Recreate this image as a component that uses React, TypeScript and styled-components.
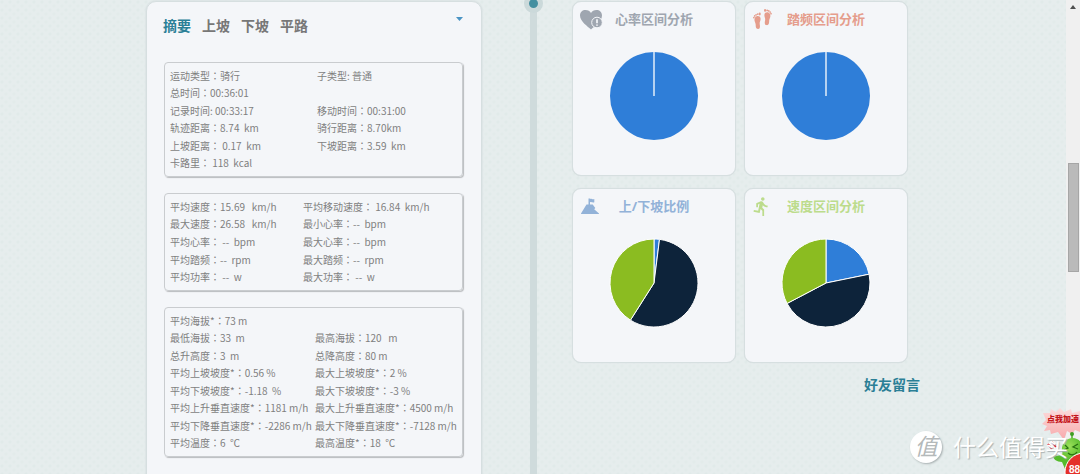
import React from "react";
import styled, { createGlobalStyle } from "styled-components";
import { MdDirectionsRun } from "react-icons/md";

const color = {
  page: "#e6eded",
  surface: "#f4f6f9",
  edge: "#d6dfe0",
  text: "#7f7f7f",
  teal: "#2b7f96",
  blue: "#2f7ed8",
  navy: "#0d233a",
  green: "#8bbc21",
};

const GlobalStyle = createGlobalStyle`
  *, *::before, *::after { box-sizing: border-box; }
  body {
    margin: 0;
    font-family: "Noto Sans", "Noto Sans CJK SC", sans-serif;
    color: ${color.text};
    background: ${color.page};
  }
  button { font: inherit; color: inherit; background: none; border: 0; padding: 0; cursor: pointer; }
  ul, h2, p { margin: 0; padding: 0; list-style: none; }
`;

const Shell = styled.div`
  position: relative;
  display: grid;
  grid-template-columns: 1fr 14px;
  height: 100vh;
  overflow: hidden;
`;

const Page = styled.main`
  overflow: hidden;
  background-color: ${color.page};
  background-image:
    radial-gradient(circle at 2px 2px, #e1eae9 1px, transparent 2px),
    radial-gradient(circle at 6px 6px, #e3ebea 1px, transparent 2px);
  background-size: 8px 8px;
`;

const Columns = styled.div`
  display: grid;
  grid-template-columns: 1fr 20px 1fr;
  max-width: 774px;
  min-height: 100%;
  margin: 0 auto;
`;

const SummaryPanel = styled.section`
  width: 336px;
  margin-top: 1px;
  padding: 12px 18px 40px 16px;
  background: ${color.surface};
  border: 1px solid ${color.edge};
  border-radius: 10px;
  box-shadow: 0 0 1px 1px #dde5e6;
`;

const PanelHead = styled.div`
  display: flex;
  justify-content: space-between;
  align-items: flex-start;
  height: 48px;
`;

const Tabs = styled.nav`
  display: flex;
  gap: 11px;
`;

const Tab = styled.button<{ $active?: boolean }>`
  font-size: 14px;
  line-height: 24px;
  font-weight: 700;
  color: ${(p) => (p.$active ? color.teal : "#777")};
`;

const MenuButton = styled.button`
  display: flex;
  padding: 3px 0;
`;

const StatList = styled.div`
  display: grid;
  gap: 16px;
  padding-left: 1px;
`;

const StatBox = styled.ul<{ $split: number; $height: number }>`
  display: grid;
  grid-template-columns: ${(p) => p.$split}px 1fr;
  grid-auto-rows: 1fr;
  align-items: center;
  min-height: ${(p) => p.$height}px;
  padding: 4px 0 4px 5px;
  border: 1px solid #c9cccf;
  border-radius: 4px;
  box-shadow: 1px 1px 1px #b9bcbe;
`;

const Stat = styled.li<{ $second?: boolean }>`
  grid-column: ${(p) => (p.$second ? 2 : 1)};
  font-family: "Noto Sans CJK SC", sans-serif;
  font-size: 10px;
  line-height: 16px;
  white-space: pre;
`;

const Colon = styled.span`
  font-family: "Noto Sans CJK TC", sans-serif;
`;

const Timeline = styled.div`
  position: relative;
  width: 7px;
  margin: 0 auto;
  background: #cfdbdc;
`;

const TimelineNode = styled.span`
  position: absolute;
  top: -6px;
  left: -6px;
  width: 19px;
  height: 19px;
  border: 5px solid #cbd9da;
  border-radius: 50%;
  background: #448fa0;
`;

const Side = styled.div`
  padding: 1px 0 0 29px;
`;

const CardGrid = styled.div`
  display: grid;
  grid-template-columns: 164px 164px;
  gap: 12px 8px;
`;

const Card = styled.section`
  min-height: 175px;
  padding: 5px 6px;
  background: ${color.surface};
  border: 1px solid ${color.edge};
  border-radius: 9px;
  box-shadow: 0 0 1px #cfd8d9;
`;

const CardHead = styled.div<{ $tint: string }>`
  display: grid;
  grid-template-columns: 24px 1fr 24px;
  align-items: center;
  height: 24px;
  color: ${(p) => p.$tint};
`;

const CardTitle = styled.h2`
  font-size: 13px;
  line-height: 20px;
  font-weight: 700;
  text-align: center;
  white-space: nowrap;
`;

const PieSvg = styled.svg`
  display: block;
  margin: 20px auto 0;
`;

const CommentsTitle = styled.h2`
  margin-top: 10px;
  font-size: 14px;
  line-height: 24px;
  text-align: right;
  color: ${color.teal};
`;

const ScrollTrack = styled.div`
  display: flex;
  flex-direction: column;
  align-items: center;
  padding-top: 5px;
  background: #f0f0f0;
`;

const ScrollSpace = styled.div`
  flex: 155 1 0;
`;

const ScrollThumb = styled.div`
  flex: 107 1 0;
  width: 11px;
  background: #bababa;
  border: 1px solid #a6a6a6;
`;

const ScrollRest = styled.div`
  flex: 203 1 0;
`;

const Watermark = styled.div`
  position: absolute;
  right: 12px;
  bottom: 10px;
  display: flex;
  align-items: center;
  gap: 11px;
  color: #fff;
  font-size: 23px;
  line-height: 34px;
  text-shadow: 1px 1px 1px #aab2b3;
`;

const WatermarkBadge = styled.span`
  width: 32px;
  height: 32px;
  border-radius: 50%;
  background: #fff;
  box-shadow: 1px 1px 2px #a8b0b1;
  color: #b4b9ba;
  font-size: 23px;
  line-height: 30px;
  font-style: italic;
  text-align: center;
  text-shadow: none;
`;

const Mascot = styled.svg`
  position: absolute;
  right: 0;
  bottom: 0;
`;

type Row = [string, string?];

const groups: { split: number; height: number; rows: Row[] }[] = [
  {
    split: 147,
    height: 115,
    rows: [
      ["运动类型：骑行", "子类型: 普通"],
      ["总时间：00:36:01"],
      ["记录时间: 00:33:17", "移动时间：00:31:00"],
      ["轨迹距离：8.74  km", "骑行距离：8.70km"],
      ["上坡距离： 0.17  km", "下坡距离：3.59  km"],
      ["卡路里： 118  kcal"],
    ],
  },
  {
    split: 133,
    height: 98,
    rows: [
      ["平均速度：15.69   km/h", "平均移动速度： 16.84  km/h"],
      ["最大速度：26.58   km/h", "最小心率：--  bpm"],
      ["平均心率： --  bpm", "最大心率：--  bpm"],
      ["平均踏频：--  rpm", "最大踏频：--  rpm"],
      ["平均功率： --  w", "最大功率： --  w"],
    ],
  },
  {
    split: 145,
    height: 150,
    rows: [
      ["平均海拔*：73 m"],
      ["最低海拔：33  m", "最高海拔：120   m"],
      ["总升高度：3  m", "总降高度：80 m"],
      ["平均上坡坡度*：0.56 %", "最大上坡坡度*：2 %"],
      ["平均下坡坡度*：-1.18  %", "最大下坡坡度*：-3 %"],
      ["平均上升垂直速度*：1181 m/h", "最大上升垂直速度*：4500 m/h"],
      ["平均下降垂直速度*：-2286 m/h", "最大下降垂直速度*：-7128 m/h"],
      ["平均温度：6  ℃", "最高温度*：18  ℃"],
    ],
  },
];

function StatText({ text }: { text: string }) {
  const [label, value] = text.split("：");
  if (value === undefined) return <>{text}</>;
  return (
    <>
      {label}
      <Colon>：</Colon>
      {value}
    </>
  );
}

type Slice = { share: number; fill: string };

function Pie({ slices, label }: { slices: Slice[]; label: string }) {
  const c = 45;
  const r = 44;
  const at = (t: number) =>
    `${c + r * Math.sin(2 * Math.PI * t)} ${c - r * Math.cos(2 * Math.PI * t)}`;
  let from = 0;
  return (
    <PieSvg width="90" height="90" viewBox="0 0 90 90" role="img" aria-label={label}>
      {slices.length === 1 ? (
        <>
          <circle cx={c} cy={c} r={r} fill={slices[0].fill} />
          <path d={`M${c} ${c}V1`} stroke="#fff" strokeWidth="1.3" />
        </>
      ) : (
        slices.map((s) => {
          const start = from;
          from += s.share;
          return (
            <path
              key={s.fill}
              d={`M${c} ${c}L${at(start)}A${r} ${r} 0 ${s.share > 0.5 ? 1 : 0} 1 ${at(from)}Z`}
              fill={s.fill}
              stroke="#fff"
              strokeWidth="1"
              strokeLinejoin="round"
            />
          );
        })
      )}
    </PieSvg>
  );
}

const HeartIcon = () => (
  <svg width="24" height="22" viewBox="0 0 24 22" aria-hidden="true">
    <path
      d="M12 21.5C9 18.500 1 13.500 1 7.500C1 4 3.500 2 6.500 2C9 2 11 3.200 12 5C13 3.200 15 2 17.500 2C20.500 2 23 4 23 7.500C23 13.500 15 18.500 12 21.500Z"
      fill="currentColor"
    />
    <circle cx="18" cy="14.500" r="5.300" fill="currentColor" stroke="#f4f6f9" strokeWidth="1" />
    <path d="M18 11.300V15.200M18 16.400V17.800" stroke="#f4f6f9" strokeWidth="1.700" />
  </svg>
);

const FeetIcon = () => (
  <svg width="22" height="22" viewBox="-1 -1 23 23" fill="currentColor" aria-hidden="true">
    <path d="M3 9.500C4.500 6.600 8.500 6.800 9 10C9.300 12.200 7.800 13.500 8.100 15.600C8.400 17.500 9 20.700 6.500 20.900C3.900 21 4 18.500 3.900 16.500C3.800 14 1.800 12.300 3 9.500Z" />
    <circle cx="2" cy="9" r="0.900" />
    <circle cx="2.900" cy="7.300" r="0.900" />
    <circle cx="4.300" cy="6.100" r="0.900" />
    <circle cx="6" cy="5.400" r="1" />
    <ellipse cx="8.100" cy="5.300" rx="1.100" ry="1.500" />
    <path d="M18.900 5.500C17.500 2.600 13.500 2.900 13 6C12.700 8 14.200 9.500 13.800 11.500C13.400 13.500 12.700 16.500 15.200 16.900C17.800 17.200 17.900 14.500 18 12.500C18.100 10 20.100 8.300 18.900 5.500Z" />
    <circle cx="19.900" cy="4.900" r="0.900" />
    <circle cx="19" cy="3.300" r="0.900" />
    <circle cx="17.600" cy="2.100" r="0.900" />
    <circle cx="15.900" cy="1.500" r="1" />
    <ellipse cx="13.700" cy="1.500" rx="1.100" ry="1.400" />
  </svg>
);

const PeakIcon = () => (
  <svg width="22" height="20" viewBox="0 0 22 20" fill="currentColor" aria-hidden="true">
    <path d="M9.500 2.500H11V3C12.500 2 13.300 4 15.300 3V6.200C13.500 7.200 12.500 5.200 11 6.200V8.500H13.700L16.300 12L15.200 13.200L20 17.500V18H2V17.500L7.500 8.500H9.500Z" />
  </svg>
);

const cards = [
  {
    title: "心率区间分析",
    tint: "#9fa6b0",
    icon: <HeartIcon />,
    slices: [{ share: 1, fill: color.blue }],
  },
  {
    title: "踏频区间分析",
    tint: "#e59d8c",
    icon: <FeetIcon />,
    slices: [{ share: 1, fill: color.blue }],
  },
  {
    title: "上/下坡比例",
    tint: "#92b2d8",
    icon: <PeakIcon />,
    slices: [
      { share: 0.02, fill: color.blue },
      { share: 0.57, fill: color.navy },
      { share: 0.41, fill: color.green },
    ],
  },
  {
    title: "速度区间分析",
    tint: "#bcdc8c",
    icon: <MdDirectionsRun size={21} aria-hidden="true" />,
    slices: [
      { share: 0.218, fill: color.blue },
      { share: 0.455, fill: color.navy },
      { share: 0.327, fill: color.green },
    ],
  },
];

function SpeedUpMascot() {
  return (
    <Mascot width="42" height="68" viewBox="0 0 42 68" role="img" aria-label="点我加速 88">
      <defs>
        <linearGradient id="burst" x1="0" y1="0" x2="0" y2="1">
          <stop offset="0" stopColor="#fbdcdc" />
          <stop offset="1" stopColor="#f8a9ab" />
        </linearGradient>
        <radialGradient id="body" cx="0.4" cy="0.3" r="0.8">
          <stop offset="0" stopColor="#9be05a" />
          <stop offset="1" stopColor="#3fae1e" />
        </radialGradient>
      </defs>
      <path
        d="M5 7L12 7L13 3L18 6L22 2L26 6L33 3L34 7L42 5V26L37 24L34 28L29 25L26 34L20 26L13 28L12 24L6 25L9 20L4 18L8 14Z"
        fill="url(#burst)"
      />
      <path d="M34 38V29" stroke="#4cae28" strokeWidth="1.500" />
      <circle cx="34" cy="28" r="2" fill="#3f9d22" />
      <path d="M15 48C18 51 22 50 27 46L31 55L27 63L24 56C19 56 14 53 15 48Z" fill="#55bb2c" />
      <ellipse cx="35" cy="44" rx="11" ry="12" fill="url(#body)" transform="rotate(-20 35 44)" />
      <path d="M26 44L30 42L27 39M40 38L35 41L40 43" fill="none" stroke="#277211" strokeWidth="1.300" />
      <path d="M30 47C33 50 37 49 39 46" fill="none" stroke="#277211" strokeWidth="1.300" />
      <path d="M10 38L16 44M13 35L19 41" stroke="#fff" strokeWidth="4" />
      <path d="M10 38L14 43M14 36L18 41" stroke="#d92128" strokeWidth="2" />
      <circle cx="46" cy="66" r="19" fill="#e4312b" stroke="#fff" strokeWidth="1" />
      <text x="9" y="14" fontSize="8" fontWeight="900" fill="#c4161c" dominantBaseline="middle">
        点我加速
      </text>
      <text x="31" y="67" fontSize="10" fontWeight="700" fill="#fff" fontFamily="Liberation Sans, sans-serif">
        88
      </text>
    </Mascot>
  );
}

export default function App() {
  return (
    <>
      <GlobalStyle />
      <Shell>
        <Page>
          <Columns>
            <SummaryPanel>
              <PanelHead>
                <Tabs>
                  {["摘要", "上坡", "下坡", "平路"].map((name, i) => (
                    <Tab key={name} type="button" $active={i === 0}>
                      {name}
                    </Tab>
                  ))}
                </Tabs>
                <MenuButton type="button" aria-label="菜单">
                  <svg width="7" height="4" viewBox="0 0 7 4" aria-hidden="true">
                    <path d="M0 0H7L3.500 4Z" fill="#4a94c4" />
                  </svg>
                </MenuButton>
              </PanelHead>
              <StatList>
                {groups.map((g) => (
                  <StatBox key={g.split} $split={g.split} $height={g.height}>
                    {g.rows.map(([first, second]) => (
                      <React.Fragment key={first}>
                        <Stat>
                          <StatText text={first} />
                        </Stat>
                        {second && (
                          <Stat $second>
                            <StatText text={second} />
                          </Stat>
                        )}
                      </React.Fragment>
                    ))}
                  </StatBox>
                ))}
              </StatList>
            </SummaryPanel>
            <Timeline>
              <TimelineNode />
            </Timeline>
            <Side>
              <CardGrid>
                {cards.map((c) => (
                  <Card key={c.title}>
                    <CardHead $tint={c.tint}>
                      {c.icon}
                      <CardTitle>{c.title}</CardTitle>
                    </CardHead>
                    <Pie slices={c.slices} label={c.title} />
                  </Card>
                ))}
              </CardGrid>
              <CommentsTitle>好友留言</CommentsTitle>
            </Side>
          </Columns>
        </Page>
        <ScrollTrack aria-hidden="true">
          <svg width="6" height="4" viewBox="0 0 6 4">
            <path d="M3 0L6 4H0Z" fill="#505050" />
          </svg>
          <ScrollSpace />
          <ScrollThumb />
          <ScrollRest />
        </ScrollTrack>
        <SpeedUpMascot />
        <Watermark>
          <WatermarkBadge>值</WatermarkBadge>
          <span>什么值得买</span>
        </Watermark>
      </Shell>
    </>
  );
}
